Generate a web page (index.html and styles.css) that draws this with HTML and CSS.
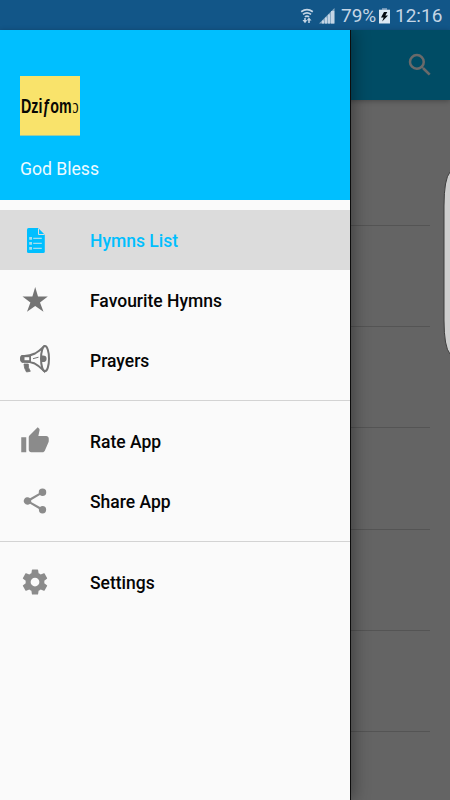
FILE: index.html
```html
<!DOCTYPE html>
<html lang="en">
<head>
<meta charset="utf-8">
<title>Hymns</title>
<link rel="stylesheet" href="styles.css">
</head>
<body>
<div class="phone">
  <header class="status">
    <svg class="status-wifi" viewBox="0 0 14 18" width="14" height="18" fill="none" stroke="#c4d5e5" stroke-width="1.7">
      <path d="M1.200 4.800Q7 .4 12.800 4.800M3 7.400Q7 4.200 11 7.400M4.900 9.900Q7 8.200 9.100 9.900"/>
      <path d="M5 11V15M9 16v-4" stroke-width="1.500"/>
      <path d="M2.500 13h5L5 16.300zM6.500 13.500h5L9 10.500z" fill="#c4d5e5" stroke="none"/>
    </svg>
    <svg class="status-signal" viewBox="0 0 16 16" width="16" height="16" fill="#c4d5e5">
      <path d="M0 15.500L15.500 0V15.500z" opacity=".65"/>
      <path d="M3 12.500h2v3H3zM6 9.500h2v6H6zM9 6.500h2v9H9zM12 3h3.300v12.500H12z"/>
    </svg>
    <span class="status-percent">79%</span>
    <svg class="status-battery" viewBox="0 0 11 16" width="11" height="16">
      <path d="M3 0h5v2H3z" fill="#6f95b7"/>
      <path d="M0 1.700h11V15.500H0z" fill="#dce8f2"/>
      <path d="M5 4L2 9.500h2.600L3.200 13.600 9 7.600H6.300L8.300 4z" fill="#050a10"/>
    </svg>
    <time class="status-time">12:16</time>
  </header>

  <div class="stage">
    <main class="page">
      <div class="toolbar">
        <svg viewBox="0 0 24 24" width="30" height="30" fill="#6a6a6a"><path d="M15.500 14h-.79l-.28-.27A6.470 6.470 0 0 0 16 9.500 6.500 6.500 0 1 0 9.500 16c1.610 0 3.090-.59 4.230-1.570l.27.28v.79l5 4.990L20.490 19zm-6 0a4.500 4.500 0 1 1 0-9 4.500 4.500 0 0 1 0 9z"/></svg>
      </div>
      <div class="list">
        <div class="row first"></div>
        <div class="row"></div>
        <div class="row"></div>
        <div class="row"></div>
        <div class="row"></div>
        <div class="row"></div>
      </div>
    </main>

    <nav class="drawer">
      <div class="account">
        <svg class="logo" viewBox="0 0 60 60" width="60" height="60">
          <path d="M0 0h60v60H0z" fill="#f9e36b"/>
          <path d="M0 59.500h60" stroke="#9bcba6"/>
          <text class="logo-text" transform="translate(1 36.500) scale(.68 1)">Dziƒom</text>
          <text class="logo-end" transform="translate(52.600 36.800) scale(.62 1)">ɔ</text>
        </svg>
        <div class="greeting">God Bless</div>
      </div>
      <div class="menu">
        <div class="item selected">
          <svg viewBox="20 225 30 30" width="30" height="30">
            <path d="M28.500 228H38.200L44.800 234.800V251.500Q44.800 253 43.300 253H28.500Q27 253 27 251.500V229.500Q27 228 28.500 228z" fill="#00bfff"/>
            <path d="M38.500 228.500V234.500H44.500" fill="none" stroke="#dcdcdc" stroke-width="1"/>
            <path d="M29.200 237h2.800v2.800h-2.800zM29.200 242h2.800v2.800h-2.800zM29.200 247h2.800v2.800h-2.800zM33.200 237.800h8.600v1.300h-8.600zM33.200 242.800h8.600v1.300h-8.600zM33.200 247.800h8.600v1.300h-8.600z" fill="#a4ddec"/>
          </svg>
          <span>Hymns List</span>
        </div>
        <div class="item">
          <svg viewBox="20 285 30 30" width="30" height="30" fill="#747474"><path d="M35.200 287L38 296.600H47.800L40 302.500 43.500 311.800 35.200 306 27 311.800 30.400 302.500 22.500 296.600H32.400z"/></svg>
          <span>Favourite Hymns</span>
        </div>
        <div class="item">
          <svg viewBox="20 345 30 30" width="30" height="30">
            <path d="M22.500 356Q29 356.500 35 353.500 39.500 351 44 346.500V370.800Q38.500 365.500 34 363.200 29 361.300 22.500 361.800 20.700 359 22.500 356z" fill="#fafafa" stroke="#747474" stroke-width="2"/>
            <ellipse cx="45" cy="358.700" rx="4" ry="12.600" fill="#fafafa" stroke="#747474" stroke-width="2"/>
            <path d="M22.500 355H31V362.500H22.500Q20 362.500 20 358.700T22.500 355z" fill="#747474"/>
            <path d="M24.500 357.200h4.700v3h-4.700z" fill="#fafafa"/>
            <path d="M41.500 355.500Q46.600 354.800 46.600 358.700T41.500 362Q40.300 358.500 41.500 355.500z" fill="#747474"/>
            <path d="M33 358.700L38.500 357.200" stroke="#747474" stroke-width="1"/>
            <path d="M24 364H28.300Q27.800 367.500 30.300 371.300L26.500 372Q24 368.500 24 364z" fill="#747474" stroke="#747474" stroke-width=".8"/>
          </svg>
          <span>Prayers</span>
        </div>
        <hr>
        <div class="item">
          <svg viewBox="0 0 24 24" width="30" height="30" fill="#8b8b8b"><path d="M1 21h4V9H1zm22-11c0-1.100-.9-2-2-2h-6.310l.95-4.570.03-.32c0-.41-.17-.79-.44-1.060L14.170 1 7.590 7.590C7.220 7.950 7 8.450 7 9v10c0 1.100.9 2 2 2h9c.83 0 1.540-.5 1.840-1.220l3.020-7.050c.09-.23.14-.47.14-.73z"/></svg>
          <span>Rate App</span>
        </div>
        <div class="item">
          <svg viewBox="0 0 24 24" width="30" height="30" fill="#8b8b8b"><path d="M18 16.080c-.76 0-1.440.3-1.960.77L8.910 12.700c.05-.23.09-.46.09-.7s-.04-.47-.09-.7l7.050-4.110c.54.5 1.250.81 2.040.81a3 3 0 1 0-3-3c0 .24.04.47.09.7L8.040 9.810A3 3 0 1 0 6 15c.79 0 1.500-.31 2.040-.81l7.120 4.160c-.05.21-.08.43-.08.65a2.920 2.920 0 1 0 2.920-2.920z"/></svg>
          <span>Share App</span>
        </div>
        <hr>
        <div class="item">
          <svg viewBox="0 0 24 24" width="30" height="30" fill="#8b8b8b"><path d="M19.430 12.980c.04-.32.07-.64.07-.98s-.03-.66-.07-.98l2.110-1.650c.19-.15.24-.42.12-.64l-2-3.460c-.12-.22-.39-.3-.61-.22l-2.490 1c-.52-.4-1.080-.73-1.690-.98l-.38-2.650A.49.49 0 0 0 14 2h-4c-.25 0-.46.18-.49.42l-.38 2.650c-.61.25-1.170.59-1.690.98l-2.490-1c-.23-.09-.49 0-.61.22l-2 3.460c-.13.22-.07.49.12.64l2.110 1.650c-.04.32-.07.65-.07.98s.03.66.07.98l-2.110 1.650c-.19.15-.24.42-.12.64l2 3.460c.12.22.39.3.61.22l2.490-1c.52.4 1.080.73 1.690.98l.38 2.650c.03.24.24.42.49.42h4c.25 0 .46-.18.49-.42l.38-2.650c.61-.25 1.170-.59 1.690-.98l2.490 1c.23.09.49 0 .61-.22l2-3.460c.12-.22.07-.49-.12-.64zM12 15.500a3.500 3.500 0 1 1 0-7 3.500 3.500 0 0 1 0 7z"/></svg>
          <span>Settings</span>
        </div>
      </div>
    </nav>
    <svg class="edge-handle" viewBox="0 0 8 184" width="8" height="184"><path d="M8 1Q2 8 2 35V149Q2 176 8 183z" fill="#cecece"/><path d="M8 1Q2 8 2 35V149Q2 176 8 183" fill="none" stroke="#3d3d3d"/></svg>
  </div>
</div>
</body>
</html>
```

FILE: styles.css
```css
* {
  box-sizing: border-box;
}

body {
  margin: 0;
  font-family: Roboto, "Liberation Sans", sans-serif;
}

.phone {
  width: 450px;
  height: 800px;
  overflow: hidden;
  display: flex;
  flex-direction: column;
}

.status {
  height: 30px;
  flex: none;
  background: #125688;
  color: #c4d5e5;
  display: flex;
  align-items: center;
  justify-content: flex-end;
  padding: 1px 8px 0 0;
  font-size: 19px;
  line-height: 30px;
}

.status-wifi {
  margin-right: 5px;
}

.status-signal {
  margin-right: 6px;
}

.status-percent {
  width: 35px;
  margin-right: 3px;
}

.status-battery {
  margin-right: 5px;
}

.status-time {
  width: 47px;
}

.stage {
  flex: 1;
  position: relative;
  background: #646464;
}

.toolbar {
  height: 70px;
  background: #004c65;
  display: flex;
  align-items: center;
  justify-content: flex-end;
  padding-right: 15px;
  box-shadow: 0 1px 5px rgba(0, 0, 0, 0.3);
}

.list {
  padding: 0 20px;
}

.row {
  height: 101.2px;
  border-bottom: 1px solid #545454;
}

.row.first {
  height: 126px;
}

.drawer {
  position: absolute;
  top: 0;
  left: 0;
  width: 350px;
  height: 770px;
  background: #fafafa;
  box-shadow: 1px 0 0 #0c0c0c, 3px 0 16px rgba(0, 0, 0, 0.4);
  clip-path: inset(0 -24px 0 0);
}

.account {
  height: 170px;
  background: #00bfff;
  padding: 46px 20px 0;
}

.logo {
  display: block;
}

.logo-text {
  font: 700 21px "Liberation Sans", sans-serif;
  fill: #080804;
}

.logo-end {
  font: 22px "Liberation Serif", serif;
  fill: #080804;
}

.greeting {
  margin-top: 22px;
  color: #eefaff;
  font-size: 17.6px;
  line-height: 22px;
}

.menu {
  padding-top: 10px;
}

.item {
  height: 60px;
  display: flex;
  align-items: center;
  gap: 40px;
  padding: 0 20px;
  color: #050505;
  font-size: 17.5px;
  font-weight: 500;
  line-height: 22px;
}

.item span {
  padding-top: 2px;
}

.item svg {
  flex: none;
}

.item.selected {
  background: #dcdcdc;
  color: #00bfff;
}

hr {
  height: 1px;
  margin: 10px 0;
  border: 0;
  background: #d3d3d3;
}

.edge-handle {
  position: absolute;
  right: 0;
  top: 141px;
}
```
